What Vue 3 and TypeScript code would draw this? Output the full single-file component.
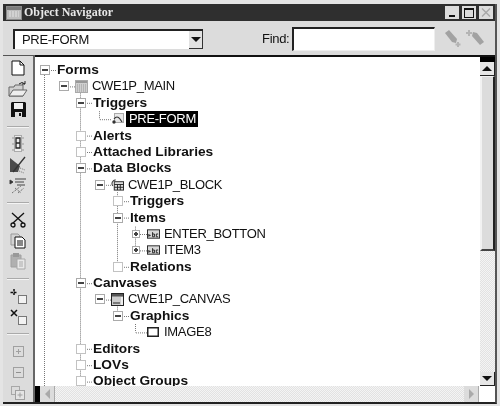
<script setup lang="ts">
interface TreeRow {
	label: string
	x: number
	box: 'minus' | 'plus' | 'empty' | 'none'
	icon?: 'form' | 'trigger' | 'block' | 'item' | 'canvas' | 'image'
	selected?: boolean
}

const ROW_H = 16.4
const TOP = 13

const rows: TreeRow[] = [
	{ label: 'Forms', x: 45, box: 'minus' },
	{ label: 'CWE1P_MAIN', x: 64, box: 'minus', icon: 'form' },
	{ label: 'Triggers', x: 81, box: 'minus' },
	{ label: 'PRE-FORM', x: 100, box: 'none', icon: 'trigger', selected: true },
	{ label: 'Alerts', x: 81, box: 'empty' },
	{ label: 'Attached Libraries', x: 81, box: 'empty' },
	{ label: 'Data Blocks', x: 81, box: 'minus' },
	{ label: 'CWE1P_BLOCK', x: 100, box: 'minus', icon: 'block' },
	{ label: 'Triggers', x: 118, box: 'empty' },
	{ label: 'Items', x: 118, box: 'minus' },
	{ label: 'ENTER_BOTTON', x: 136, box: 'plus', icon: 'item' },
	{ label: 'ITEM3', x: 136, box: 'plus', icon: 'item' },
	{ label: 'Relations', x: 118, box: 'empty' },
	{ label: 'Canvases', x: 81, box: 'minus' },
	{ label: 'CWE1P_CANVAS', x: 100, box: 'minus', icon: 'canvas' },
	{ label: 'Graphics', x: 118, box: 'minus' },
	{ label: 'IMAGE8', x: 136, box: 'none', icon: 'image' },
	{ label: 'Editors', x: 81, box: 'empty' },
	{ label: 'LOVs', x: 81, box: 'empty' },
	{ label: 'Object Groups', x: 81, box: 'empty' },
]

const rowY = (i: number) => TOP + ROW_H * i

// dotted guides: x, from y, to y (tree-local, x in window coords)
const verticals = [
	{ x: 45, from: rowY(0) + 5, to: 329 },
	{ x: 81, from: rowY(1) + 5, to: rowY(19) },
	{ x: 100, from: rowY(2) + 4, to: rowY(3) },
	{ x: 118, from: rowY(7) + 5, to: rowY(12) },
	{ x: 136, from: rowY(9) + 5, to: rowY(11) },
	{ x: 118, from: rowY(14) + 5, to: rowY(15) },
	{ x: 136, from: rowY(15) + 4, to: rowY(16) },
]

const guides = rows.map((r, i) => ({ x1: r.x, x2: r.x + (r.icon ? 12 : 11), y: rowY(i) }))

const isBold = (r: TreeRow) => !r.icon
</script>

<template>
	<div class="window">
		<div class="frame">
			<header class="titlebar">
				<svg class="title-icon" width="16" height="14" viewBox="0 0 16 14">
					<rect x="0.5" y="0.5" width="15" height="13" fill="#bdbdbd" stroke="#8a8a8a" />
					<rect x="1" y="1" width="14" height="3" fill="#7c7c7c" />
					<path d="M3 6h10M3 8h10M3 10h10" stroke="#e6e6e6" stroke-dasharray="2 1" />
				</svg>
				<span class="title">Object Navigator</span>
				<div class="win-buttons">
					<button class="win-btn"><i class="min-glyph"></i></button>
					<button class="win-btn"><i class="max-glyph"></i></button>
					<button class="win-btn close">
						<svg width="10" height="9" viewBox="0 0 10 9"><path d="M1 0.5l8 8M9 0.5l-8 8" stroke="#a8a8a8" stroke-width="1.4" /></svg>
					</button>
				</div>
			</header>

			<div class="topbar">
				<div class="combo">
					<span class="combo-text">PRE-FORM</span>
					<span class="combo-arrow"><i class="arrow-down"></i></span>
				</div>
				<label class="find-label">Find:</label>
				<div class="find-input"></div>
				<div class="find-icons">
					<svg width="19" height="20" viewBox="0 0 19 20">
						<path d="M1 4l4-3 8 9-1 4-4-1z" fill="#a2a2a2" />
						<path d="M14 13v5M11.500 15.500h5" stroke="#b4b4b4" stroke-width="2" />
					</svg>
					<svg width="19" height="20" viewBox="0 0 19 20">
						<path d="M18 13l-4 3-8-9 1-4 4 1z" fill="#a2a2a2" />
						<path d="M3 1v6M0 4h6" stroke="#b4b4b4" stroke-width="2" />
					</svg>
				</div>
			</div>

			<div class="body">
				<aside class="sidebar">
					<div class="tool">
						<svg width="14" height="16" viewBox="0 0 14 16"><path d="M1 1h8l4 4v10H1z" fill="#fff" stroke="#111" /><path d="M9 1v4h4" fill="none" stroke="#111" /></svg>
					</div>
					<div class="tool">
						<svg width="20" height="16" viewBox="0 0 20 16"><path d="M1 6h5l1-2h8v11H1z" fill="#d0d0d0" stroke="#666" /><path d="M1 15l4-6h14l-4 6z" fill="#eee" stroke="#666" /><path d="M11 3q3-3 6 0M17 0v3h-3" fill="none" stroke="#222" /></svg>
					</div>
					<div class="tool">
						<svg width="15" height="15" viewBox="0 0 15 15"><path d="M1 0h13l1 1v14H0V1z" fill="#111" /><rect x="3" y="1" width="9" height="6" fill="#eee" /><rect x="4" y="10" width="7" height="5" fill="#ddd" /><rect x="8" y="11" width="2" height="3" fill="#111" /></svg>
					</div>
					<hr class="sep" />
					<div class="tool">
						<svg width="14" height="18" viewBox="0 0 14 18"><path d="M1 3h2M1 9h2M1 15h2M11 3h2M11 9h2M11 15h2" stroke="#999" /><rect x="3.500" y="0.500" width="7" height="16" fill="#eee" stroke="#aaa" /><path d="M5 3h4v5H5zM5 8h4v5H5z" fill="none" stroke="#222" stroke-width="1.300" /></svg>
					</div>
					<div class="tool">
						<svg width="18" height="18" viewBox="0 0 18 18"><path d="M1 2l10 8-2 6H1z" fill="#4a4a4a" /><path d="M16 1L4 16" stroke="#333" stroke-width="1.300" /><path d="M11 12l5 2M10 15l5 2" stroke="#777" stroke-dasharray="1 1" /></svg>
					</div>
					<div class="tool">
						<svg width="18" height="18" viewBox="0 0 18 18"><path d="M1 4l3 2-3 2zM6 3h11M6 6h9M8 9h8" fill="#222" stroke="#444" /><path d="M3 17l9-7M6 12l6 5M9 17l6-5" stroke="#555" stroke-dasharray="1 1" /></svg>
					</div>
					<hr class="sep" />
					<div class="tool">
						<svg width="16" height="16" viewBox="0 0 16 16"><path d="M14 1L3 11M2 1l11 10" stroke="#111" stroke-width="1.300" /><circle cx="3" cy="13" r="2" fill="none" stroke="#111" stroke-width="1.300" /><circle cx="13" cy="13" r="2" fill="none" stroke="#111" stroke-width="1.300" /></svg>
					</div>
					<div class="tool">
						<svg width="16" height="16" viewBox="0 0 16 16"><path d="M1 1h7l2 2v9H1z" fill="#d4d4d4" stroke="#999" /><path d="M5 4h7l3 3v8H5z" fill="#fff" stroke="#111" /><path d="M7 8h6M7 10h6M7 12h6" stroke="#111" /></svg>
					</div>
					<div class="tool">
						<svg width="16" height="18" viewBox="0 0 16 18"><path d="M1 3h10v12H1z" fill="#b0b0b0" stroke="#a0a0a0" /><rect x="3" y="1" width="6" height="4" fill="#999" /><path d="M7 7h8v10H7z" fill="#e8e8e8" stroke="#a8a8a8" /><path d="M9 10h4M9 12h4M9 14h4" stroke="#aaa" /></svg>
					</div>
					<hr class="sep" />
					<div class="tool">
						<svg width="18" height="16" viewBox="0 0 18 16"><path d="M5 1v7M1.500 4.500h7" stroke="#111" stroke-width="1.500" stroke-dasharray="2.500 1" /><rect x="9.500" y="7.500" width="8" height="8" fill="#f2f2f2" stroke="#777" /></svg>
					</div>
					<div class="tool">
						<svg width="18" height="16" viewBox="0 0 18 16"><path d="M2 1l6 6M8 1L2 7" stroke="#111" stroke-width="1.500" /><rect x="9.500" y="7.500" width="8" height="8" fill="#f2f2f2" stroke="#777" /></svg>
					</div>
					<hr class="sep" />
					<div class="tool">
						<svg width="11" height="11" viewBox="0 0 11 11"><rect x="0.500" y="0.500" width="10" height="10" fill="none" stroke="#a0a0a0" /><path d="M5.500 3v5M3 5.500h5" stroke="#a0a0a0" /></svg>
					</div>
					<div class="tool">
						<svg width="11" height="11" viewBox="0 0 11 11"><rect x="0.500" y="0.500" width="10" height="10" fill="none" stroke="#a0a0a0" /><path d="M3 5.500h5" stroke="#909090" /></svg>
					</div>
					<div class="tool">
						<svg width="14" height="14" viewBox="0 0 14 14"><rect x="0.500" y="0.500" width="8" height="8" fill="none" stroke="#a8a8a8" /><rect x="4.500" y="4.500" width="9" height="9" fill="#e4e4e4" stroke="#a0a0a0" /><path d="M9 6.500v5M6.500 9h5" stroke="#a0a0a0" /></svg>
					</div>
				</aside>

				<div class="main">
					<div class="upper">
						<div class="tree">
							<svg class="guides" width="445" height="329">
								<line v-for="(v, i) in verticals" :key="'v' + i" :x1="v.x - 35.500" :x2="v.x - 35.500" :y1="v.from" :y2="v.to" />
								<line v-for="(g, i) in guides" :key="'h' + i" :x1="g.x1 - 35" :x2="g.x2 - 35" :y1="g.y + 0.500" :y2="g.y + 0.500" />
							</svg>
							<div
								v-for="row in rows"
								:key="row.label + row.x"
								class="row"
								:style="{ paddingLeft: row.x - 35 - 5 + 'px' }"
							>
								<span class="box" :class="row.box">
									<i v-if="row.box === 'minus' || row.box === 'plus'" class="bar-h"></i>
									<i v-if="row.box === 'plus'" class="bar-v"></i>
								</span>
								<span v-if="row.icon" class="node-icon">
									<svg v-if="row.icon === 'form'" width="13" height="13" viewBox="0 0 13 13"><rect x="0.500" y="0.500" width="12" height="12" fill="#d0d0d0" stroke="#aaa" /><rect x="1" y="1" width="11" height="2" fill="#999" /><path d="M2 5h9M2 7h9M2 9h9M2 11h9" stroke="#999" stroke-dasharray="1 1" /></svg>
									<svg v-else-if="row.icon === 'trigger'" width="13" height="13" viewBox="0 0 13 13"><rect x="3.500" y="0.500" width="9" height="9" fill="#e8e8e8" stroke="#aaa" /><path d="M3 6q3-4 6 0l2 3" fill="none" stroke="#333" stroke-width="1.200" /><circle cx="3" cy="9" r="1.700" fill="#333" /></svg>
									<svg v-else-if="row.icon === 'block'" width="14" height="13" viewBox="0 0 14 13"><path d="M5 1.500a4 4 0 0 0-3 6.500" fill="none" stroke="#444" stroke-width="1.200" /><rect x="3.500" y="3.500" width="10" height="9" fill="#ddd" stroke="#222" /><path d="M3.500 6.500h10M3.500 9.500h10M7 6.500v6M10 6.500v6" stroke="#222" /></svg>
									<svg v-else-if="row.icon === 'item'" width="14" height="10" viewBox="0 0 14 10"><rect x="0.500" y="0.500" width="13" height="9" fill="#d8d8d8" stroke="#222" /><path d="M2 6.500h2M2 5v3M6 3v5h2V5H6M10 5h2M10 8h2M10 5v3" fill="none" stroke="#222" /></svg>
									<svg v-else-if="row.icon === 'canvas'" width="13" height="13" viewBox="0 0 13 13"><rect x="0.500" y="0.500" width="12" height="12" fill="#ccc" stroke="#222" /><rect x="1" y="1" width="11" height="2.500" fill="#555" /><rect x="2" y="9" width="7" height="2" fill="#777" /><rect x="10" y="4" width="2" height="8" fill="#eee" /></svg>
									<svg v-else width="12" height="10" viewBox="0 0 12 10"><rect x="0.750" y="0.750" width="10.500" height="8.500" fill="#fff" stroke="#222" stroke-width="1.500" /></svg>
								</span>
								<span class="label" :class="{ bold: isBold(row), selected: row.selected }">{{ row.label }}</span>
							</div>
						</div>
						<div class="vscroll">
							<div class="vcap"></div>
							<div class="sbtn"><i class="arrow-up"></i></div>
							<div class="vthumb"></div>
							<div class="track"></div>
							<div class="sbtn"><i class="arrow-down"></i></div>
						</div>
					</div>
					<div class="hscroll">
						<div class="hcap"></div>
						<div class="sbtn wide"><i class="arrow-left"></i></div>
						<div class="track"></div>
						<div class="sbtn wide"><i class="arrow-right"></i></div>
						<div class="corner"></div>
					</div>
				</div>
			</div>
		</div>
	</div>
</template>

<style>
html,
body {
	margin: 0;
	background: #fff;
}
</style>

<style scoped>
.window {
	width: 500px;
	height: 406px;
	box-sizing: border-box;
	padding: 4px 3px 2px 3px;
	background: #e4e4e4;
	overflow: hidden;
	font-family: "Liberation Sans", Arial, sans-serif;
	color: #111;
	filter: blur(0.3px);
}

.frame {
	height: 100%;
	display: flex;
	flex-direction: column;
	box-sizing: border-box;
	border-right: 2px solid #555;
	border-bottom: 2px solid #222;
	background: #dcdcdc;
}

.titlebar {
	flex: none;
	height: 17px;
	display: flex;
	align-items: center;
	padding: 0 2px 0 3px;
	background: #2f2f2f;
}

.title-icon {
	flex: none;
}

.title {
	margin-left: 2px;
	font-family: "Liberation Serif", serif;
	font-weight: 700;
	font-size: 12px;
	color: #e8e8e8;
}

.win-buttons {
	margin-left: auto;
	display: flex;
	gap: 3px;
}

.win-btn {
	width: 14px;
	height: 13px;
	padding: 0;
	display: flex;
	align-items: center;
	justify-content: center;
	background: #dcdcdc;
	border: 0;
	border-radius: 0;
	position: relative;
}

.min-glyph {
	width: 6px;
	height: 2px;
	margin-top: 7px;
	background: #111;
}

.max-glyph {
	width: 8px;
	height: 7px;
	border: 1px solid #111;
	border-top-width: 2px;
}

.topbar {
	flex: none;
	height: 33px;
	margin-top: 1px;
	display: flex;
	align-items: center;
	padding-left: 10px;
	background: #dcdcdc;
	box-sizing: border-box;
}

.combo {
	width: 190px;
	height: 20px;
	display: flex;
	box-sizing: border-box;
	border-top: 2px solid #222;
	border-left: 2px solid #222;
	background: #fff;
}

.combo-text {
	flex: 1;
	padding-left: 7px;
	font-size: 13px;
	letter-spacing: -0.3px;
	line-height: 17px;
}

.combo-arrow {
	width: 14px;
	display: flex;
	align-items: center;
	justify-content: center;
	background: #e2e2e2;
	border-right: 1px solid #333;
	border-bottom: 1px solid #333;
	box-sizing: border-box;
}

.find-label {
	margin-left: 59px;
	font-size: 13px;
	letter-spacing: -0.3px;
}

.find-input {
	width: 143px;
	height: 24px;
	margin-left: 3px;
	box-sizing: border-box;
	background: #fff;
	border-top: 2px solid #222;
	border-left: 2px solid #222;
	border-right: 1px solid #eee;
	border-bottom: 1px solid #eee;
}

.find-icons {
	display: flex;
	gap: 3px;
	margin-left: 9px;
}

.body {
	flex: 1;
	min-height: 0;
	display: flex;
}

.sidebar {
	flex: none;
	width: 32px;
	box-sizing: border-box;
	padding: 1.750px 0 0;
	border-right: 2px solid #666;
	border-top: 1px solid #555;
	display: flex;
	flex-direction: column;
	align-items: center;
	overflow: hidden;
}

.tool {
	flex: none;
	height: 20.500px;
	width: 100%;
	display: flex;
	align-items: center;
	justify-content: center;
}

.sep {
	flex: none;
	width: 22px;
	height: 2px;
	margin: 6.250px 0;
	box-sizing: border-box;
	border: 0;
	border-top: 1px solid #aaa;
	border-bottom: 1px solid #f4f4f4;
	background: transparent;
}

.main {
	flex: 1;
	min-width: 0;
	display: flex;
	flex-direction: column;
	border-top: 2px solid #111;
}

.upper {
	flex: 1;
	min-height: 0;
	display: flex;
}

.tree {
	flex: 1;
	min-width: 0;
	position: relative;
	padding-top: 4.800px;
	background: #fff;
	overflow: hidden;
}

.guides {
	position: absolute;
	left: 0;
	top: 0;
}

.guides line {
	stroke: #777;
	stroke-width: 1;
	stroke-dasharray: 1 1;
}

.row {
	position: relative;
	height: 16.400px;
	display: flex;
	align-items: center;
}

.box {
	flex: none;
	width: 10px;
	height: 10px;
	box-sizing: border-box;
	position: relative;
	background: #fff;
	border: 1px solid #aaa;
}

.box.none {
	visibility: hidden;
}

.box.empty {
	border-color: #c2c2c2;
}

.box.plus {
	width: 8px;
	height: 8px;
	margin: 0 1px;
	border-color: #aaa;
}

.bar-h {
	position: absolute;
	left: 1px;
	right: 1px;
	top: 50%;
	height: 2px;
	margin-top: -1px;
	background: #444;
}

.bar-v {
	position: absolute;
	top: 1px;
	bottom: 1px;
	left: 50%;
	width: 2px;
	margin-left: -1px;
	background: #444;
}

.node-icon {
	flex: none;
	width: 13px;
	margin-left: 6px;
	height: 14px;
	display: flex;
	align-items: center;
	background: #fff;
}

.label {
	font-size: 13px;
	letter-spacing: -0.3px;
	line-height: 16px;
	margin-left: 3px;
	white-space: nowrap;
	background: #fff;
	padding: 0 1px;
}

.label.bold {
	font-size: 13.700px;
	letter-spacing: 0;
	font-weight: 700;
	margin-left: 6px;
	padding-left: 1px;
	position: relative;
}

.label.selected {
	margin-left: 2px;
	padding: 0 2px 0 3px;
	background: #000;
	color: #fff;
}

.vscroll {
	flex: none;
	width: 15px;
	display: flex;
	flex-direction: column;
}

.vcap {
	flex: none;
	height: 5px;
	background: #000;
}

.sbtn {
	flex: none;
	height: 14px;
	display: flex;
	align-items: center;
	justify-content: center;
	background: #e6e6e6;
	border-bottom: 1px solid #222;
	border-right: 1px solid #222;
	box-sizing: border-box;
}

.sbtn.wide {
	width: 15px;
	height: auto;
	border-bottom: 0;
	border-right: 1px solid #aaa;
	background: #dcdcdc;
}

.vthumb {
	flex: none;
	height: 175px;
	box-sizing: border-box;
	background: #dcdcdc;
	border-left: 2px solid #f2f2f2;
	border-top: 1px solid #f2f2f2;
	border-right: 2px solid #222;
	border-bottom: 2px solid #444;
}

.track {
	flex: 1;
	background: repeating-conic-gradient(#f4f4f4 0 25%, #e2e2e2 0 50%) 0 0 / 2px 2px;
}

.hscroll {
	flex: none;
	height: 16px;
	display: flex;
}

.hcap {
	flex: none;
	width: 5px;
	background: #000;
}

.corner {
	flex: none;
	width: 16px;
	background: #fff;
}

.arrow-up,
.arrow-down {
	width: 0;
	height: 0;
	border-left: 5px solid transparent;
	border-right: 5px solid transparent;
}

.arrow-up {
	border-bottom: 5px solid #111;
}

.arrow-down {
	border-top: 5px solid #111;
}

.arrow-left,
.arrow-right {
	width: 0;
	height: 0;
	border-top: 5px solid transparent;
	border-bottom: 5px solid transparent;
}

.arrow-left {
	border-right: 5px solid #aaa;
}

.arrow-right {
	border-left: 5px solid #aaa;
}
</style>
